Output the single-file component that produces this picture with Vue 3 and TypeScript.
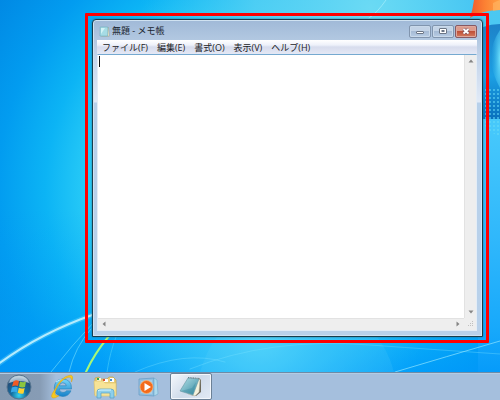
<script setup lang="ts">
import { ref } from 'vue'

interface MenuEntry {
  label: string
  key: string
}

const menus: MenuEntry[] = [
  { label: 'ファイル', key: 'F' },
  { label: '編集', key: 'E' },
  { label: '書式', key: 'O' },
  { label: '表示', key: 'V' },
  { label: 'ヘルプ', key: 'H' },
]

const text = ref('')
</script>

<template>
  <div class="desktop">
    <svg class="wallpaper" viewBox="0 0 500 372" preserveAspectRatio="none" aria-hidden="true">
      <defs>
        <radialGradient id="glow" gradientUnits="userSpaceOnUse" cx="270" cy="190" r="340">
          <stop offset="0" stop-color="#66def8" />
          <stop offset=".35" stop-color="#42d2f7" />
          <stop offset=".53" stop-color="#2accf7" />
          <stop offset=".66" stop-color="#0cb4f5" />
          <stop offset=".8" stop-color="#029cf0" />
          <stop offset="1" stop-color="#0086e2" />
        </radialGradient>
        <radialGradient id="topGlow" gradientUnits="userSpaceOnUse" cx="370" cy="8" r="230">
          <stop offset="0" stop-color="#6bdaf4" />
          <stop offset=".5" stop-color="#56cff3" stop-opacity=".8" />
          <stop offset="1" stop-color="#30bcf0" stop-opacity="0" />
        </radialGradient>
        <linearGradient id="floor" x1="0" y1="0" x2="0" y2="1">
          <stop offset="0" stop-color="#0098fb" stop-opacity="0" />
          <stop offset=".6" stop-color="#009ffa" stop-opacity=".25" />
          <stop offset="1" stop-color="#0098fb" stop-opacity=".75" />
        </linearGradient>
        <radialGradient id="floorGlow" gradientUnits="userSpaceOnUse" cx="260" cy="335" r="160">
          <stop offset="0" stop-color="#4ed2fa" />
          <stop offset="1" stop-color="#25bdf9" stop-opacity="0" />
        </radialGradient>
        <linearGradient id="rightSky" x1="0" y1="0" x2="0" y2="1">
          <stop offset="0" stop-color="#4cc8f0" />
          <stop offset=".35" stop-color="#46c8fb" />
          <stop offset=".65" stop-color="#2fb7fb" />
          <stop offset=".88" stop-color="#18a9fb" />
          <stop offset="1" stop-color="#069bfa" />
        </linearGradient>
        <linearGradient id="orange" x1="0" y1="0" x2="1" y2="0">
          <stop offset="0" stop-color="#f0592b" />
          <stop offset=".5" stop-color="#fc8133" />
          <stop offset="1" stop-color="#ffa044" />
        </linearGradient>
        <linearGradient id="deepBlue" x1="0" y1="0" x2="0" y2="1">
          <stop offset="0" stop-color="#1d82c8" />
          <stop offset=".55" stop-color="#1c9fe3" />
          <stop offset="1" stop-color="#0870bd" />
        </linearGradient>
        <radialGradient id="flare" cx="1" cy=".5" r="1">
          <stop offset="0" stop-color="#6fe0fb" />
          <stop offset="1" stop-color="#30b4ec" stop-opacity="0" />
        </radialGradient>
        <pattern id="dots" width="4" height="4" patternUnits="userSpaceOnUse">
          <circle cx="2" cy="2" r=".9" fill="#66d9f8" opacity=".8" />
        </pattern>
        <filter id="soft"><feGaussianBlur stdDeviation=".7" /></filter>
      </defs>
      <rect width="500" height="372" fill="url(#glow)" />
      <rect width="500" height="240" fill="url(#topGlow)" />
      <rect y="210" width="500" height="162" fill="url(#floor)" />
      <rect y="175" width="500" height="197" fill="url(#floorGlow)" />
      <rect x="478" width="22" height="372" fill="url(#rightSky)" />
      <path d="M200 372Q210 340 225 330L370 328Q388 348 394 372Z" fill="#7be1fc" opacity=".12" />
      <path d="M474 0H500V10Q483 10 470 18Q473 8 474 0Z" fill="url(#orange)" />
      <path d="M493 3Q497 1 500 0V10Q496 10 493 11Z" fill="#ffb765" opacity=".6" />
      <path d="M483 27Q491 24 500 24V119H483Z" fill="url(#deepBlue)" />
      <path d="M500 30Q482 56 500 88Z" fill="url(#flare)" />
      <path d="M483 88H500V136Q490 134 483 123Z" fill="url(#dots)" />
      <g fill="none" stroke-linecap="round">
        <path d="M-3 365Q40 333 95 314" stroke="#61d5fc" stroke-width="5" opacity=".4" filter="url(#soft)" />
        <path d="M-3 365Q40 333 95 314" stroke="#b5ebfd" stroke-width="2" />
        <path d="M51 372Q72 345 94 322M69 372Q75 347 91 329" stroke="#65d5fb" opacity=".7" />
        <path d="M86 372Q94 354 109 336" stroke="#a7f878" stroke-width="2" />
        <path d="M107 372Q110 352 116 337" stroke="#55d8fb" opacity=".5" />
        <path d="M135 372Q185 350 225 362M190 369Q270 337 370 345Q440 350 500 354" stroke="#7ce3ff" opacity=".35" />
        <path d="M395 372Q445 357 500 341" stroke="#8ee4ff" opacity=".7" />
        <path d="M386 0Q377 13 369 18" stroke="#a5eefb" opacity=".7" />
      </g>
    </svg>

    <main class="workspace">
      <div class="highlight">
        <section class="window" aria-label="無題 - メモ帳">
          <header class="titlebar">
            <svg class="title-icon" viewBox="0 0 11 11" aria-hidden="true">
              <path d="M2 1.500H9.500L10.200 10.200H2.500Z" fill="#fff3cf" stroke="#8e9b90" stroke-width=".6" />
              <path d="M1.200 1H8.800L8.500 10H1Z" fill="#a6dce5" stroke="#6eafbd" stroke-width=".6" />
              <path d="M2 2H6L2 8Z" fill="#d2f3f6" />
            </svg>
            <h1 class="title">無題 - メモ帳</h1>
            <div class="controls">
              <button class="control" type="button" aria-label="最小化">
                <svg viewBox="0 0 20 11"><rect x="6.500" y="5.500" width="7" height="2" rx=".5" fill="#fff" stroke="#6b7686" /></svg>
              </button>
              <button class="control" type="button" aria-label="最大化">
                <svg viewBox="0 0 20 11"><rect x="6.500" y="2.500" width="7" height="5" rx=".5" fill="#fff" stroke="#6b7686" /><rect x="9" y="4.500" width="2" height="1" fill="#8298b4" stroke="#6b7686" /></svg>
              </button>
              <button class="control close" type="button" aria-label="閉じる">
                <svg viewBox="0 0 20 11"><path d="M7.500 3L12.500 7.500M12.500 3L7.500 7.500" stroke="#7d5560" stroke-width="3.200" /><path d="M7.500 3L12.500 7.500M12.500 3L7.500 7.500" stroke="#fff" stroke-width="1.800" /></svg>
              </button>
            </div>
          </header>

          <nav class="menubar" aria-label="メニュー">
            <button v-for="m in menus" :key="m.key" class="menu" type="button">{{ m.label }}({{ m.key }})</button>
          </nav>

          <div class="editor">
            <div class="page">
              <textarea v-model="text" class="text" aria-label="本文" spellcheck="false"></textarea>
              <span v-if="!text" class="caret"></span>
            </div>
            <div class="scroll vertical">
              <button type="button" class="arrow" aria-label="上へ"><svg viewBox="0 0 12 12"><path d="M3.500 7.500L6 4.500L8.500 7.500Z" /></svg></button>
              <button type="button" class="arrow" aria-label="下へ"><svg viewBox="0 0 12 12"><path d="M3.500 4.500L6 7.500L8.500 4.500Z" /></svg></button>
            </div>
            <div class="scroll horizontal">
              <button type="button" class="arrow" aria-label="左へ"><svg viewBox="0 0 12 12"><path d="M7.500 2.500L4.500 5L7.500 7.500Z" /></svg></button>
              <button type="button" class="arrow" aria-label="右へ"><svg viewBox="0 0 12 12"><path d="M4.500 2.500L7.500 5L4.500 7.500Z" /></svg></button>
            </div>
            <svg class="grip" viewBox="0 0 12 12" aria-hidden="true">
              <path d="M8 3h1v1h-1zM6 5h1v1h-1zM8 5h1v1h-1zM4 7h1v1h-1zM6 7h1v1h-1zM8 7h1v1h-1z" fill="#c0c0c0" />
            </svg>
          </div>
        </section>
      </div>
    </main>

    <footer class="taskbar">
      <button class="task start" type="button" aria-label="スタート">
        <svg viewBox="0 0 26 26">
          <defs>
            <radialGradient id="orb" cx=".5" cy=".85" r=".8">
              <stop offset="0" stop-color="#35d2ef" /><stop offset=".4" stop-color="#146da0" /><stop offset=".8" stop-color="#234f7a" /><stop offset="1" stop-color="#a5bbca" />
            </radialGradient>
          </defs>
          <circle cx="13" cy="13" r="12" fill="url(#orb)" stroke="#58758f" />
          <path d="M3 9Q5 2 13 2T23 9Q13 5 3 9Z" fill="#dbe8ef" opacity=".65" />
          <path d="M7.500 7.500Q10 5.500 13 7L12 12Q9 11 6 12.500Z" fill="#f05a24" />
          <path d="M14 7.500Q17 9 20 7.500L19 13Q16 14 13 12.500Z" fill="#8bc63e" />
          <path d="M5.800 13.500Q9 12 11.800 13.200L11 18.300Q8 17 4.800 18.500Z" fill="#36a8e9" />
          <path d="M12.800 13.800Q15.500 15.200 18.700 14L17.500 19.500Q15 20.500 11.800 18.800Z" fill="#ffd22e" />
        </svg>
      </button>
      <button class="task" type="button" aria-label="Internet Explorer">
        <svg viewBox="0 0 26 26">
          <defs><linearGradient id="ieBlue" x1="0" y1="0" x2="0" y2="1"><stop offset="0" stop-color="#75d7fa" /><stop offset="1" stop-color="#1781c9" /></linearGradient></defs>
          <path fill-rule="evenodd" d="M22.500 15H10.200Q10.500 18.500 14 18.500Q16.500 18.500 17.500 16.800H22Q19.500 22.500 13.800 22.500Q5.500 22 5.200 14Q5.500 5.500 13.800 5Q22.800 5.500 22.500 15ZM10.300 11.800H17.300Q17 8.800 13.800 8.800Q10.800 8.800 10.300 11.800Z" fill="url(#ieBlue)" stroke="#267fb9" stroke-width=".6" />
          <path d="M7 8Q10 5.500 14 5.500" fill="none" stroke="#b9edfc" />
          <path d="M5.500 16Q.500 23 4 24Q6 24.500 10 21.800Q4.500 22.500 6.500 16.500Q11 6 19 3.300Q23 2.500 22.500 8Q25.500 1.200 21 1.200Q12 2.500 5.500 16Z" fill="#f7c91d" stroke="#d99e18" stroke-width=".5" />
        </svg>
      </button>
      <button class="task" type="button" aria-label="エクスプローラー">
        <svg viewBox="0 0 26 26">
          <path d="M3 6V4L7 3L9 5H15L17 3H21L24 6V21H3Z" fill="#e8ce78" stroke="#c4a44e" stroke-width=".7" />
          <path d="M5 4H9V8H5Z" fill="#f8f8e5" /><path d="M5 4h2v2H5z" fill="#2faa58" /><path d="M11 5h5v3h-5z" fill="#fff" /><path d="M11 5h2v2h-2z" fill="#df5030" /><path d="M18 4h4v4h-4z" fill="#fff" /><path d="M18 5h2v2h-2z" fill="#468ed0" />
          <path d="M2 7H11L13 9H24V22H3Z" fill="#f7e396" stroke="#dec26d" stroke-width=".6" />
          <path d="M5 18Q5 15 8 15H19Q22 15 22 18V24H18V19H9V24H5Z" fill="#8dcfea" stroke="#559fc5" stroke-width=".7" />
          <path d="M6 17Q7 16 9 16H19" fill="none" stroke="#dcf7ff" />
        </svg>
      </button>
      <button class="task" type="button" aria-label="Windows Media Player">
        <svg viewBox="0 0 26 26">
          <path d="M4 5L19 4V22L4 21Z" fill="#91bfe0" stroke="#659bc3" stroke-width=".7" />
          <path d="M19 4L22 6L23 20L19 22Z" fill="#add9ed" stroke="#70aac9" stroke-width=".6" />
          <path d="M6 7L17 6V20L6 19Z" fill="#a7cfea" />
          <circle cx="11.500" cy="13" r="6.500" fill="#f36b1c" stroke="#ffb36b" stroke-width=".7" />
          <path d="M9.500 9L16 13L9.500 17Z" fill="#fff" />
        </svg>
      </button>
      <button class="task active" type="button" aria-label="メモ帳">
        <svg viewBox="0 0 26 26">
          <defs><linearGradient id="noteBlue" x1="0" y1="0" x2="1" y2="1"><stop offset="0" stop-color="#b4e1e7" /><stop offset=".5" stop-color="#75b5c4" /><stop offset="1" stop-color="#368ba0" /></linearGradient></defs>
          <path d="M21 4L23 6V18L18 22L13 21Z" fill="#6d695a" />
          <path d="M20 4L22 6L21 18L17 22L10 20Z" fill="#f5f2dc" stroke="#b5b4a3" stroke-width=".5" />
          <path d="M10 4L21 5L15 21L2 17Z" fill="url(#noteBlue)" stroke="#6696a3" stroke-width=".6" />
          <path d="M10 3.500L21 4.500" fill="none" stroke="#6b818a" stroke-width="1.200" stroke-dasharray="1 .7" />
          <path d="M3 17L14 14L18 8L15 20Z" fill="#277f96" opacity=".3" />
        </svg>
      </button>
    </footer>
  </div>
</template>

<style>
html,
body {
  margin: 0;
}
</style>

<style scoped>
.desktop {
  position: relative;
  display: flex;
  flex-direction: column;
  min-height: 100vh;
  overflow: hidden;
  background: #16b8f5;
  font-family: "Open Sans", "Noto Sans CJK JP", sans-serif;
}
.desktop *,
.desktop {
  box-sizing: border-box;
}
.wallpaper {
  position: absolute;
  top: 0;
  left: 0;
  width: 100%;
  height: calc(100% - 28px);
}
button {
  margin: 0;
  padding: 0;
  border: 0;
  background: none;
  font: inherit;
  color: inherit;
}
svg {
  display: block;
}
.workspace {
  position: relative;
  display: flex;
  flex: 1;
  padding: 13px 11px 29px 85px;
}
.highlight {
  display: flex;
  flex: 1;
  min-width: 0;
  padding: 3px 3px 3px 4px;
  border: 3px solid #f00;
  border-radius: 1px;
}
.window {
  display: flex;
  flex: 1;
  flex-direction: column;
  min-width: 0;
  padding: 0 5px 5px 4px;
  border: 1px solid #183d4d;
  border-radius: 4px 4px 0 0;
  background: linear-gradient(#a0b9d7 0, #b2c8e1 20px, #c3d4ea 36px, #e1eaf7 82px, #b7d0ea 83px, #b9d1ea 100%);
  box-shadow: inset 0 0 0 1px #d0e2f1, 0 0 2px #25677e;
}
.titlebar {
  display: flex;
  flex: 0 0 20px;
  align-items: center;
  gap: 2px;
  padding: 2px 0 0 2px;
}
.title-icon {
  width: 11px;
  height: 11px;
}
.title {
  flex: 1;
  margin: 0;
  color: #19242e;
  font-size: 9px;
  font-weight: 400;
  line-height: 14px;
  white-space: nowrap;
}
.controls {
  display: flex;
  gap: 1px;
}
.control {
  width: 22px;
  height: 13px;
  border: 1px solid #8195ae;
  border-radius: 2px;
  background: linear-gradient(#c3d3e6 0 45%, #a6bbd5 50%, #b8cde5);
  box-shadow: inset 0 0 0 1px #c9d9ea;
}
.control svg {
  width: 20px;
  height: 11px;
}
.close {
  border-color: #875963;
  background: linear-gradient(#dc9b8d 0 45%, #c05038 50%, #d47c60);
  box-shadow: inset 0 0 0 1px #dda89d;
}
.menubar {
  display: flex;
  flex: 0 0 14px;
  gap: 9px;
  padding: 0 5px;
  background: linear-gradient(#fff 0, #eef1fa 5px, #d7dced 7px, #e4e8f5);
}
.menu {
  color: #202125;
  font-size: 9px;
  line-height: 13px;
  white-space: nowrap;
}
.editor {
  display: grid;
  flex: 1;
  grid-template-rows: 1fr 12px;
  grid-template-columns: 1fr 12px;
  border: 1px solid #e4edf6;
  border-top-color: #75a9d0;
  background: #eee;
}
.page {
  position: relative;
  display: flex;
  background: #fff;
}
.text {
  flex: 1;
  min-width: 0;
  padding: 1px 2px;
  border: 0;
  outline: 0;
  background: #fff;
  font: 10px/12px "Open Sans", "Noto Sans CJK JP", sans-serif;
  resize: none;
}
.caret {
  position: absolute;
  top: 1px;
  left: 1px;
  width: 1px;
  height: 11px;
  background: #111;
}
.scroll {
  display: flex;
  justify-content: space-between;
  background: #eee;
}
.vertical {
  flex-direction: column;
  border-left: 1px solid #e2e2e2;
}
.horizontal {
  border-top: 1px solid #e2e2e2;
}
.arrow {
  width: 12px;
  height: 12px;
}
.arrow svg {
  width: 12px;
  height: 12px;
  fill: #858585;
}
.grip {
  width: 12px;
  height: 12px;
}
.taskbar {
  position: relative;
  display: flex;
  flex: 0 0 28px;
  gap: 1px;
  border-top: 1px solid #6e8ba7;
  background: linear-gradient(90deg, #8499b0 0, #879cb5 40px, #a5bfdd 56px, #a5bfdd 100%);
  box-shadow: inset 0 1px #b4cce3;
}
.task {
  display: flex;
  align-items: center;
  justify-content: center;
  width: 42px;
  height: 27px;
}
.task svg {
  width: 26px;
  height: 26px;
}
.start {
  width: 38px;
}
.start + .task {
  margin-left: 2px;
}
.active {
  border: 1px solid #6c8196;
  border-radius: 2px;
  background: linear-gradient(135deg, #f5f8fc, #cfdbea 50%, #e3eaf4);
  box-shadow: inset 0 0 0 1px #f3f7fc;
}
</style>
